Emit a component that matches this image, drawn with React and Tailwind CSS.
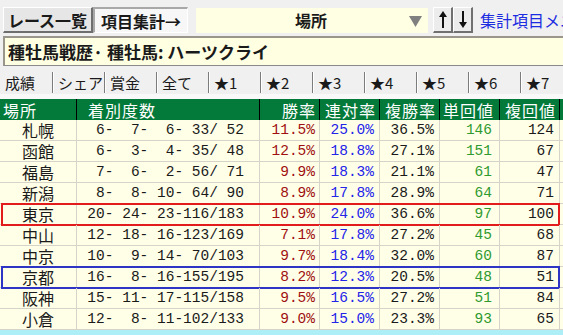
import React from "react";

const jp = { fontFamily: '"Noto Sans CJK JP", "Noto Sans", sans-serif' };
const mono = { fontFamily: '"Liberation Mono", "DejaVu Sans Mono", monospace' };

const rows = [
    ["札幌", [6, 7, 6, 33, 52], "11.5%", "25.0%", "36.5%", 146, 124],
    ["函館", [6, 3, 4, 35, 48], "12.5%", "18.8%", "27.1%", 151, 67],
    ["福島", [7, 6, 2, 56, 71], "9.9%", "18.3%", "21.1%", 61, 47],
    ["新潟", [8, 8, 10, 64, 90], "8.9%", "17.8%", "28.9%", 64, 71],
    ["東京", [20, 24, 23, 116, 183], "10.9%", "24.0%", "36.6%", 97, 100],
    ["中山", [12, 18, 16, 123, 169], "7.1%", "17.8%", "27.2%", 45, 68],
    ["中京", [10, 9, 14, 70, 103], "9.7%", "18.4%", "32.0%", 60, 87],
    ["京都", [16, 8, 16, 155, 195], "8.2%", "12.3%", "20.5%", 48, 51],
    ["阪神", [15, 11, 17, 115, 158], "9.5%", "16.5%", "27.2%", 51, 84],
    ["小倉", [12, 8, 11, 102, 133], "9.0%", "15.0%", "23.3%", 93, 65],
];

const tabs = ["成績", "シェア", "賞金", "全て", "★1", "★2", "★3", "★4", "★5", "★6", "★7"];

const pad = (n) => String(n).padStart(3, " ");
const counts = (c) => `${pad(c[0])}-${pad(c[1])}-${pad(c[2])}-${pad(c[3])}/${pad(c[4])}`;

const gridCols = "grid grid-cols-[77px_183px_60px_60px_60px_60px_60px_3px]";
const cell = "border-r border-b border-[#d6d3c8] h-[21px] flex items-center justify-end text-[14.5px] leading-none";

const Arrow = ({ up }) => (
    <svg width="8" height="17" viewBox="0 0 8 17">
        {up ? (
            <>
                <polygon points="4,0 8,6 0,6" fill="#111" />
                <rect x="3" y="5" width="2" height="12" fill="#111" />
            </>
        ) : (
            <>
                <rect x="3" y="0" width="2" height="12" fill="#111" />
                <polygon points="0,11 8,11 4,17" fill="#111" />
            </>
        )}
    </svg>
);

const App = () => {
    return (
        <div className="w-[563px] h-[335px] overflow-hidden bg-[#f0f0f0] text-[#1a1a1a]" style={jp}>
            {/* top bar */}
            <div className="flex items-center h-[36px] pl-[3px] pt-[4px]">
                <div className="w-[90px] h-[26px] shrink-0 whitespace-nowrap flex items-center justify-center bg-[#e6e6e6] border-t border-l border-white border-b-2 border-r-2 border-b-[#6e6e6e] border-r-[#6e6e6e] font-bold text-[16px] leading-none">
                    レース一覧
                </div>
                <div className="w-[95px] h-[26px] shrink-0 whitespace-nowrap flex items-center justify-center bg-[#f7f7f7] border-t-2 border-l-2 border-[#a8a8a8] border-b border-r border-b-white border-r-white font-bold text-[16px] leading-none">
                    項目集計→
                </div>
                <div className="ml-[8px] w-[232px] h-[25px] shrink-0 flex items-center bg-[#ffffe4] relative">
                    <span className="pl-[99px] font-bold text-[16px] leading-none">場所</span>
                    <svg className="absolute left-[213px] top-[8px]" width="13" height="11" viewBox="0 0 13 11">
                        <polygon points="0,0 13,0 6.5,11" fill="#808080" />
                    </svg>
                </div>
                <div className="ml-[5px] flex shrink-0">
                    <div className="w-[20px] h-[26px] flex items-center justify-center bg-[#ececec] border-t border-l border-white border-b-2 border-r-2 border-b-[#707070] border-r-[#707070]">
                        <Arrow up />
                    </div>
                    <div className="w-[20px] h-[26px] flex items-center justify-center bg-[#ececec] border-t border-l border-white border-b-2 border-r-2 border-b-[#707070] border-r-[#707070]">
                        <Arrow />
                    </div>
                </div>
                <div className="ml-[7px] whitespace-nowrap text-[16px] text-[#1c2ce0] leading-none">集計項目メニュー</div>
            </div>

            {/* title box */}
            <div className="ml-[3px] h-[30px] flex items-center bg-[#ffffe2] border-t-2 border-l-2 border-[#9a968c] border-b border-b-[#8a8a8a]">
                <span className="pl-[3px] font-bold text-[17px] leading-none whitespace-nowrap">種牡馬戦歴· 種牡馬: ハーツクライ</span>
            </div>

            {/* tabs */}
            <div className="h-[33px] flex items-start pt-[6px] border-b-[5px] border-[#f9f9f9]">
                {tabs.map((t, i) => (
                    <div
                        key={t}
                        className={`w-[52px] h-[21px] shrink-0 flex items-center pl-[5px] text-[15px] leading-none whitespace-nowrap ${i === 0 ? "" : "border-l border-[#7c7c7c] shadow-[inset_1px_0_0_#ffffff]"}`}
                    >
                        {t}
                    </div>
                ))}
            </div>

            {/* table */}
            <div className="bg-[#ffffe8]">
                <div className={`${gridCols} bg-[#047a3a] text-white text-[16px] tracking-[1px] leading-none`}>
                    <div className="h-[21px] flex items-center pl-[3px] border-r border-black">場所</div>
                    <div className="h-[21px] flex items-center pl-[11px] border-r border-black">着別度数</div>
                    <div className="h-[21px] flex items-center justify-end pr-[3px] border-r border-black">勝率</div>
                    <div className="h-[21px] flex items-center justify-end pr-[3px] border-r border-black">連対率</div>
                    <div className="h-[21px] flex items-center justify-end pr-[3px] border-r border-black">複勝率</div>
                    <div className="h-[21px] flex items-center justify-end pr-[5px] border-r border-black">単回値</div>
                    <div className="h-[21px] flex items-center justify-end pr-[3px] border-r border-black">複回値</div>
                    <div className="h-[21px]"></div>
                </div>

                {rows.map((r) => (
                    <div key={r[0]} className={`${gridCols} relative`}>
                        <div className="border-r border-b border-[#d6d3c8] h-[21px] flex items-center justify-center text-[16px] leading-none">{r[0]}</div>
                        <div className={`${cell} pr-[15px] whitespace-pre`} style={mono}>{counts(r[1])}</div>
                        <div className={`${cell} pr-[4px] text-[#a01010]`} style={mono}>{r[2]}</div>
                        <div className={`${cell} pr-[5px] text-[#2424e8]`} style={mono}>{r[3]}</div>
                        <div className={`${cell} pr-[5px]`} style={mono}>{r[4]}</div>
                        <div className={`${cell} pr-[7px] text-[#2f9a2f]`} style={mono}>{r[5]}</div>
                        <div className={`${cell} pr-[5px]`} style={mono}>{r[6]}</div>
                        <div className="border-b border-[#d6d3c8] h-[21px]"></div>
                        {r[0] === "東京" && (
                            <div className="absolute left-[1px] top-[-1px] w-[559px] h-[23px] border-2 border-[#e21c1c]"></div>
                        )}
                        {r[0] === "京都" && (
                            <div className="absolute left-[1px] top-[-1px] w-[559px] h-[23px] border-2 border-[#2e34c4]"></div>
                        )}
                    </div>
                ))}
                <div className="h-[5px] bg-[#aeeef6]"></div>
            </div>
        </div>
    );
};

export default App;
